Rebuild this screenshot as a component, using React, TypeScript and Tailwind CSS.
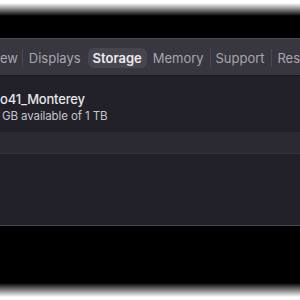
export default function App() {
  const font = { fontFamily: "Inter, 'Noto Sans', sans-serif" };
  return (
    <div className="flex h-[300px] w-[300px] flex-col overflow-hidden bg-black" style={font}>
      <div className="h-[17px] bg-[linear-gradient(to_bottom,#ffffff_3px,#000000_16px)]" />
      <div className="h-[21px] bg-black" />
      <div className="flex h-[38px] items-center overflow-hidden whitespace-nowrap border-t border-b border-t-[#4b4952] border-b-[#1a1820] bg-[#38363f] pt-px text-[13px] leading-[16px] text-[#a9a7b0]">
        <span className="w-[15px]">ew</span>
        <span className="ml-[7px] h-[18px] w-px bg-[#4a4852]" />
        <span className="ml-[6px]">Displays</span>
        <span className="ml-[7px] rounded-[6px] bg-[#47454e] px-[5px] py-[2px] font-semibold text-[#ececee]">Storage</span>
        <span className="ml-[6px]">Memory</span>
        <span className="ml-[6px] h-[18px] w-px bg-[#4a4852]" />
        <span className="ml-[5px]">Support</span>
        <span className="ml-[6px] h-[18px] w-px bg-[#4a4852]" />
        <span className="ml-[6px]">Res</span>
      </div>
      <div className="flex h-[149px] flex-col bg-[#222029]">
        <div className="flex h-[56px] flex-col justify-center pt-[6px]">
          <div className="text-[13px] font-medium leading-[18px] tracking-[-0.2px] text-[#e6e6e8]">o41_Monterey</div>
          <div className="pl-[2px] text-[11.5px] leading-[16px] tracking-[-0.1px] text-[#c6c5cb]">GB available of 1 TB</div>
        </div>
        <div className="h-[22px] border-b border-[#34323b] bg-[#2b2932]" />
      </div>
      <div className="h-px bg-[#4a4851]" />
      <div className="h-[57px] bg-black" />
      <div className="flex-1 bg-[linear-gradient(to_bottom,#000000_0px,#ffffff_14px)]" />
    </div>
  );
}
